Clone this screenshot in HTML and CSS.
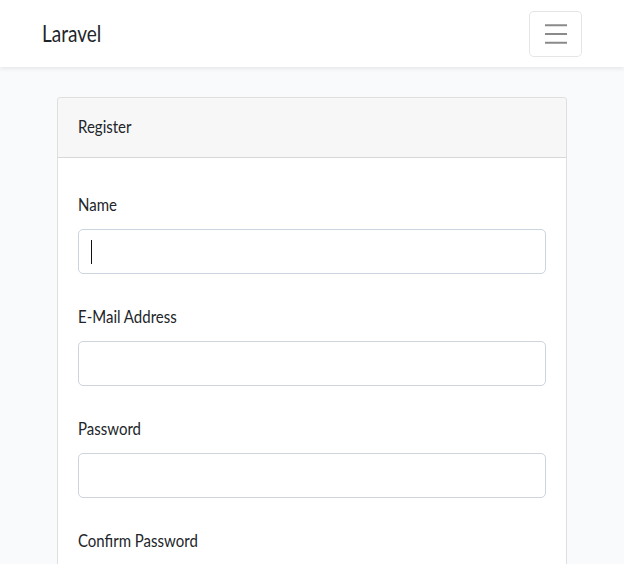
FILE: index.html
```html
<!DOCTYPE html>
<html lang="en">
<head>
<meta charset="utf-8">
<title>Laravel</title>
<link rel="stylesheet" href="styles.css">
</head>
<body>
<nav class="navbar">
  <a class="brand" href="#">Laravel</a>
  <button class="toggler" type="button" aria-label="Toggle navigation">
    <svg width="22" height="20" viewBox="0 0 22 20"><path d="M0 1.3h22M0 10h22M0 18.7h22" stroke="#8a8a8a" stroke-width="2" fill="none"/></svg>
  </button>
</nav>
<main class="main">
  <div class="card">
    <div class="card-header"><span class="txt">Register</span></div>
    <div class="card-body">
      <div class="group">
        <label class="label" for="name"><span class="txt">Name</span></label>
        <div class="field">
          <input id="name" class="input input-focus" type="text">
          <span class="caret"></span>
        </div>
      </div>
      <div class="group">
        <label class="label" for="email"><span class="txt">E-Mail Address</span></label>
        <div class="field"><input id="email" class="input" type="email"></div>
      </div>
      <div class="group">
        <label class="label" for="password"><span class="txt">Password</span></label>
        <div class="field"><input id="password" class="input" type="password"></div>
      </div>
      <div class="group">
        <label class="label" for="confirm"><span class="txt">Confirm Password</span></label>
        <div class="field"><input id="confirm" class="input" type="password"></div>
      </div>
      <div class="group">
        <button class="btn" type="submit">Register</button>
      </div>
    </div>
  </div>
</main>
</body>
</html>
```
FILE: styles.css
```css
* { box-sizing: border-box; }
html, body { margin: 0; padding: 0; }
body {
  background: #f8fafc;
  font-family: Lato, "Open Sans", sans-serif;
  color: #212529;
}
.navbar {
  height: 67px;
  background: #fff;
  box-shadow: 0 2px 4px rgba(0,0,0,0.075);
  display: flex;
  align-items: center;
  justify-content: space-between;
  padding: 0 42px;
  position: relative;
}
.brand {
  color: #212529;
  text-decoration: none;
  font-size: 19px;
  display: inline-block;
  transform: scaleY(1.25);
  margin-bottom: 3px;
}
.toggler {
  width: 53px;
  height: 46px;
  background: #fff;
  border: 1px solid rgba(0,0,0,0.1);
  border-radius: 5px;
  display: flex;
  align-items: center;
  justify-content: center;
  padding: 0;
}
.toggler svg { display: block; }
.main { padding: 30px 57px 40px; }
.card {
  background: #fff;
  border: 1px solid rgba(0,0,0,0.125);
  border-radius: 4px;
}
.card-header {
  height: 60px;
  background: #f7f7f7;
  border-bottom: 1px solid rgba(0,0,0,0.125);
  border-radius: 4px 4px 0 0;
  display: flex;
  align-items: center;
  padding: 0 20px 3px;
  font-size: 15px;
}
.txt { display: inline-block; transform: scaleY(1.2); }
.card-body { padding: 34px 20px 20px; }
.group { margin-bottom: 30px; }
.label {
  display: block;
  font-size: 15px;
  line-height: 24px;
  margin-bottom: 13px;
}
.field { position: relative; }
.input {
  display: block;
  width: 100%;
  height: 45px;
  border: 1px solid #ced4da;
  border-radius: 5px;
  background: #fff;
  font: inherit;
  outline: none;
}
.input-focus { border-color: #cbd5df; }
.caret {
  position: absolute;
  left: 13px;
  top: 11px;
  width: 1px;
  height: 24px;
  background: #111;
}
.btn {
  background: #3490dc;
  border: 1px solid #3490dc;
  color: #fff;
  border-radius: 4px;
  padding: 8px 14px;
  font: inherit;
  font-size: 15px;
}
```
